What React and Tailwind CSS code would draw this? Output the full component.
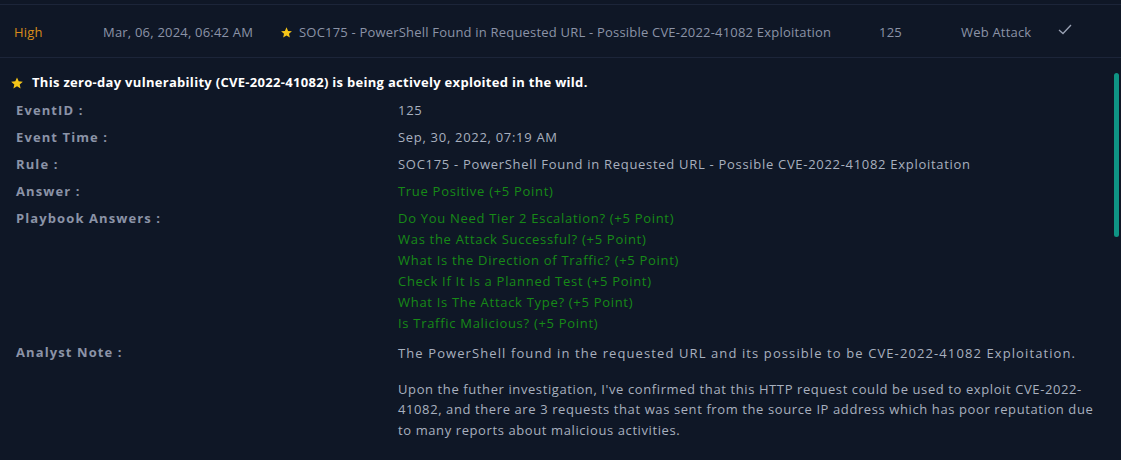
import React from 'react';

const playbook = [
  'Do You Need Tier 2 Escalation? (+5 Point)',
  'Was the Attack Successful? (+5 Point)',
  'What Is the Direction of Traffic? (+5 Point)',
  'Check If It Is a Planned Test (+5 Point)',
  'What Is The Attack Type? (+5 Point)',
  'Is Traffic Malicious? (+5 Point)',
];

const Label = ({ children }) => (
  <div className="w-[382px] shrink-0 font-bold text-[13px] tracking-[1.1px] text-[#8b93a7]">{children}</div>
);

const Star = ({ className }) => (
  <svg viewBox="0 0 24 24" className={className} fill="#f5c518">
    <path d="M12 2.5l2.9 6.6 7.1.6-5.4 4.7 1.6 7-6.2-3.7-6.2 3.7 1.6-7L2 9.7l7.1-.6z" />
  </svg>
);

export default function App() {
  return (
    <div className="relative w-[1121px] h-[460px] overflow-hidden bg-[#0f1726] pt-[4px]" style={{ fontFamily: '"Open Sans", "Noto Sans", sans-serif' }}>
      {/* summary row */}
      <div className="flex items-center h-[54px] pt-[3px] border-y border-[#1c2539] text-[13px] tracking-[0.2px] text-[#8b93a7]">
        <div className="w-[103px] pl-[14px] text-[#d98c1a]">High</div>
        <div className="w-[177px]">Mar, 06, 2024, 06:42 AM</div>
        <div className="w-[599px] flex items-center gap-[6px]">
          <Star className="w-[13px] h-[13px]" />
          <span>SOC175 - PowerShell Found in Requested URL - Possible CVE-2022-41082 Exploitation</span>
        </div>
        <div className="w-[82px]">125</div>
        <div className="w-[96px]">Web Attack</div>
        <svg viewBox="0 0 16 16" className="w-[16px] h-[16px] -mt-[8px]" fill="none" stroke="#9aa2b4" strokeWidth="1.3">
          <path d="M2 9l4 3.5L14 4" />
        </svg>
      </div>

      {/* details */}
      <div className="pt-[15px] pr-[20px]">
        <div className="flex items-center gap-[8px] pl-[10px] text-[13px] tracking-[0.3px] font-bold text-white">
          <Star className="w-[14px] h-[14px]" />
          <span>This zero-day vulnerability (CVE-2022-41082) is being actively exploited in the wild.</span>
        </div>

        <div className="pl-[16px] mt-[8px] flex flex-col gap-[9px] text-[13px] leading-[18px] tracking-[0.7px]">
          <div className="flex"><Label>EventID :</Label><div className="text-[#a8b0bf]">125</div></div>
          <div className="flex"><Label>Event Time :</Label><div className="text-[#a8b0bf]">Sep, 30, 2022, 07:19 AM</div></div>
          <div className="flex"><Label>Rule :</Label><div className="text-[#a8b0bf]">SOC175 - PowerShell Found in Requested URL - Possible CVE-2022-41082 Exploitation</div></div>
          <div className="flex"><Label>Answer :</Label><div className="text-[#178a17]">True Positive (+5 Point)</div></div>
          <div className="flex">
            <Label>Playbook Answers :</Label>
            <div className="flex flex-col gap-[3px] text-[#178a17]">
              {playbook.map((p) => <div key={p}>{p}</div>)}
            </div>
          </div>
          <div className="flex pt-[2px]">
            <Label>Analyst Note :</Label>
            <div className="text-[#a8b0bf] text-[13px] leading-[21px] whitespace-nowrap">
              <p className="tracking-[1.1px]">The PowerShell found in the requested URL and its possible to be CVE-2022-41082 Exploitation.</p>
              <p className="mt-[15px] leading-[20.5px] tracking-[0.6px]">
                Upon the futher investigation, I've confirmed that this HTTP request could be used to exploit CVE-2022-<br />
                41082, and there are 3 requests that was sent from the source IP address which has poor reputation due<br />
                to many reports about malicious activities.
              </p>
            </div>
          </div>
        </div>
      </div>

      {/* scrollbar thumb */}
      <div className="absolute right-[2px] top-[73px] w-[5px] h-[164px] rounded-full bg-[#0f9484]" />
    </div>
  );
}
